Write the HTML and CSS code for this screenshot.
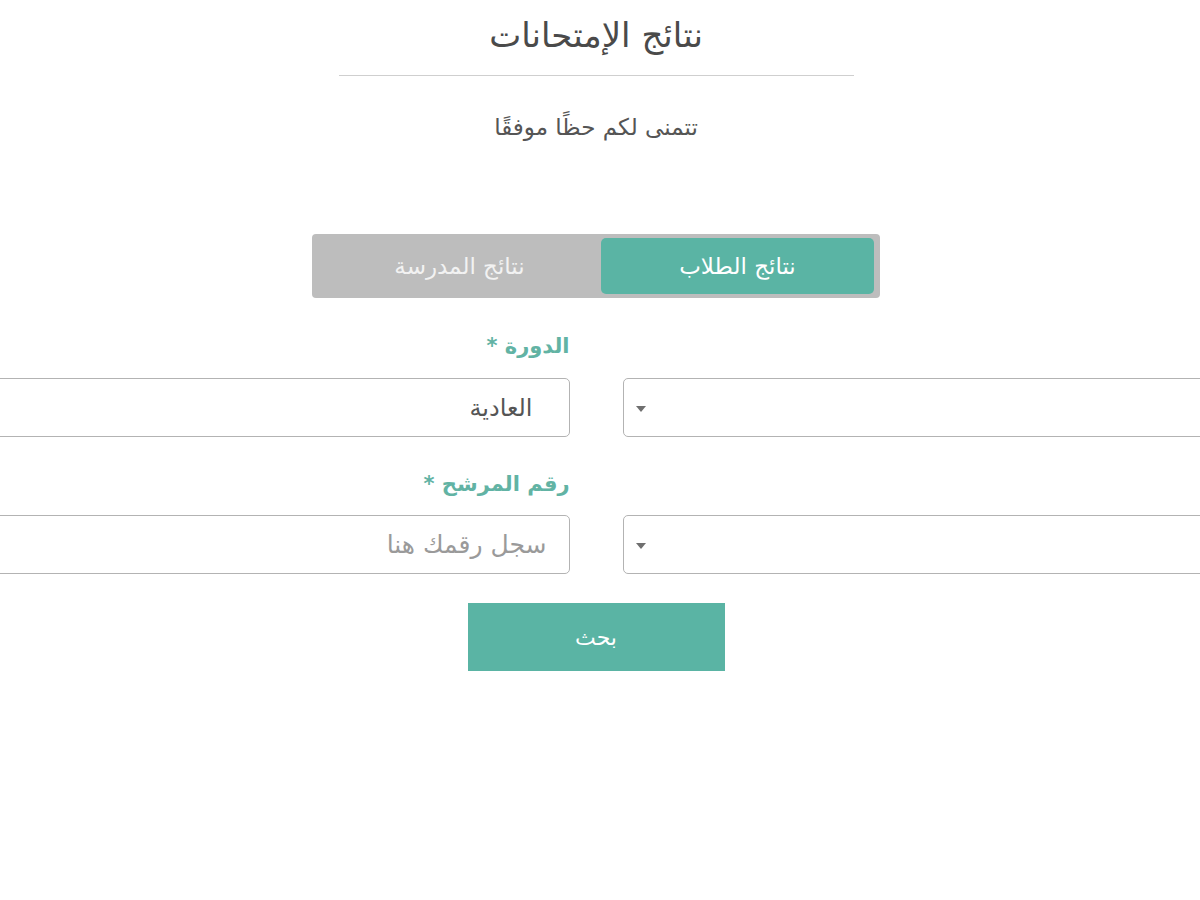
FILE: index.html
```html
<!DOCTYPE html>
<html lang="ar" dir="rtl">
<head>
    <meta charset="UTF-8">
    <title>نتائج الإمتحانات</title>
    <link rel="stylesheet" href="styles.css">
</head>
<body>
<div id="main">
    <div class="intro">
        <h1>نتائج الإمتحانات</h1>
        <div class="rule"></div>
        <p class="wish">تتمنى لكم حظًا موفقًا</p>
    </div>

    <div class="tabs">
        <button type="button" class="tab active">نتائج الطلاب</button>
        <button type="button" class="tab">نتائج المدرسة</button>
    </div>

    <div class="form-wrap">
        <form class="form">
            <div class="col-side">
                <div class="select"><span class="arrow"></span></div>
                <div class="select second"><span class="arrow"></span></div>
            </div>
            <div class="col-main">
                <label class="label">الدورة *</label>
                <div class="box value">العادية</div>
                <label class="label second">رقم المرشح *</label>
                <input class="box" type="text" placeholder="سجل رقمك هنا">
            </div>
        </form>
    </div>

    <div class="actions">
        <button type="button" class="search">بحث</button>
    </div>
</div>
</body>
</html>
```

FILE: styles.css
```css
html, body {
    margin: 0;
    height: 900px;
    overflow: hidden;
    background: #fff;
}

body {
    color: #4a4a4a;
    font-family: "DejaVu Sans", "Noto Sans", sans-serif;
    padding-right: 8px;
}

#main {
    display: flex;
    flex-direction: column;
    align-items: center;
}

.intro {
    display: flex;
    flex-direction: column;
    align-items: center;
}

h1 {
    margin: 15px 0 0;
    font-size: 34px;
    line-height: 40px;
    font-weight: normal;
    color: #4a4a4a;
}

.rule {
    width: 515px;
    height: 1px;
    margin-top: 20px;
    background: #cfcfcf;
}

.wish {
    margin: 37px 0 0;
    font-size: 23px;
    line-height: 28px;
    color: #555;
}

.tabs {
    display: flex;
    width: 556px;
    height: 56px;
    margin-top: 93px;
    padding: 4px 6px;
    background: #bdbdbd;
    border-radius: 4px;
}

.tab {
    border: 0;
    background: transparent;
    font-family: inherit;
    font-size: 23px;
    color: #f2f2f2;
    flex: 1;
    border-radius: 5px;
    cursor: pointer;
}

.tab.active {
    flex: 0 0 273px;
    background: #5ab4a4;
    color: #fff;
}

.form-wrap {
    display: flex;
    justify-content: center;
    width: 100%;
}

.form {
    display: flex;
    gap: 53px;
    flex: 0 0 auto;
}

.col-side, .col-main {
    width: 640px;
    display: flex;
    flex-direction: column;
}

.col-side {
    padding-top: 80px;
}

.label {
    display: block;
    margin-top: 34px;
    height: 28px;
    line-height: 28px;
    font-size: 21px;
    font-weight: bold;
    color: #62b3a4;
}

.label.second {
    margin-top: 33px;
}

.box {
    box-sizing: border-box;
    width: 100%;
    height: 59px;
    margin-top: 18px;
    border: 1px solid #b3b3b3;
    border-radius: 5px;
    background: #fff;
    font-family: inherit;
    font-size: 25px;
    color: #555;
    padding: 0 22px;
    outline: none;
}

.label.second + .box {
    margin-top: 17px;
}

.box.value {
    display: flex;
    align-items: center;
    padding-right: 36px;
    font-size: 24px;
}

.box::placeholder {
    color: #9a9a9a;
}

.select {
    box-sizing: border-box;
    height: 59px;
    border: 1px solid #b3b3b3;
    border-radius: 5px;
    display: flex;
    align-items: center;
    justify-content: flex-end;
    padding-left: 12px;
}

.select.second {
    margin-top: 78px;
}

.arrow {
    width: 0;
    height: 0;
    border-left: 5px solid transparent;
    border-right: 5px solid transparent;
    border-top: 6px solid #6f6f6f;
    margin-top: 2px;
}

.actions {
    margin-top: 29px;
}

.search {
    width: 257px;
    height: 68px;
    border: 0;
    background: #5ab4a4;
    color: #fff;
    font-family: inherit;
    font-size: 22px;
    cursor: pointer;
}
```
